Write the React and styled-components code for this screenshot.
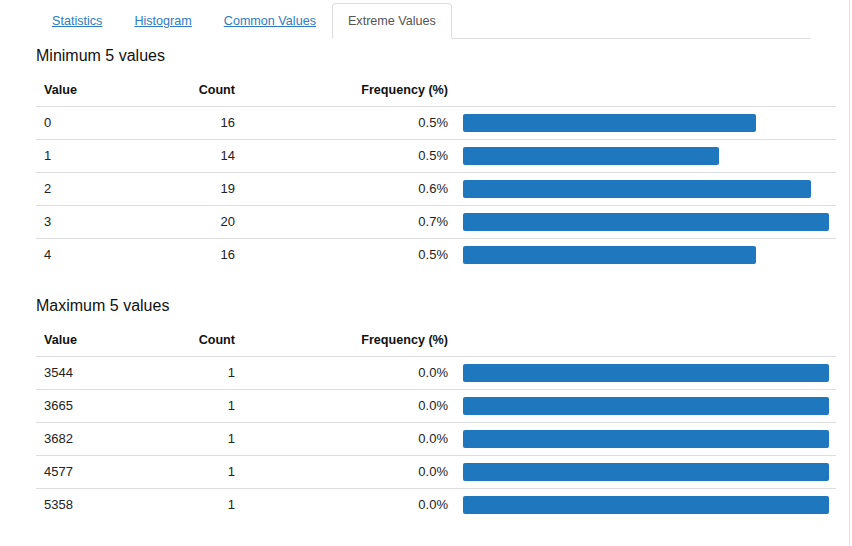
import React from 'react'
import styled, { createGlobalStyle } from 'styled-components'

const GlobalStyle = createGlobalStyle`
  body {
    margin: 0;
    background: #fff;
    font-family: "Liberation Sans", Arial, Helvetica, sans-serif;
    color: #222;
  }
`

const tabs = ['Statistics', 'Histogram', 'Common Values', 'Extreme Values']

const minValues = [
  { value: '0', count: 16, freq: '0.5%' },
  { value: '1', count: 14, freq: '0.5%' },
  { value: '2', count: 19, freq: '0.6%' },
  { value: '3', count: 20, freq: '0.7%' },
  { value: '4', count: 16, freq: '0.5%' },
]

const maxValues = [
  { value: '3544', count: 1, freq: '0.0%' },
  { value: '3665', count: 1, freq: '0.0%' },
  { value: '3682', count: 1, freq: '0.0%' },
  { value: '4577', count: 1, freq: '0.0%' },
  { value: '5358', count: 1, freq: '0.0%' },
]

const ValuesTable = ({ title, rows }) => {
  const top = Math.max(...rows.map((r) => r.count))
  return (
    <Section>
      <Heading>{title}</Heading>
      <Table>
        <colgroup>
          <col style={{ width: 104 }} />
          <col style={{ width: 103 }} />
          <col style={{ width: 213 }} />
          <col style={{ width: 380 }} />
        </colgroup>
        <thead>
          <tr>
            <Th>Value</Th>
            <Th $right>Count</Th>
            <Th $right>Frequency (%)</Th>
            <Th />
          </tr>
        </thead>
        <tbody>
          {rows.map((r) => (
            <tr key={r.value}>
              <Td>{r.value}</Td>
              <Td $right>{r.count}</Td>
              <Td $right>{r.freq}</Td>
              <BarCell>
                <Bar style={{ width: `${(r.count / top) * 100}%` }} />
              </BarCell>
            </tr>
          ))}
        </tbody>
      </Table>
    </Section>
  )
}

const App = () => {
  return (
    <Page>
      <GlobalStyle />
      <Content>
        <TabBar>
          {tabs.map((t) => (
            <Tab key={t} $active={t === 'Extreme Values'}>
              {t === 'Extreme Values' ? t : <a href="#">{t}</a>}
            </Tab>
          ))}
        </TabBar>
        <ValuesTable title="Minimum 5 values" rows={minValues} />
        <ValuesTable title="Maximum 5 values" rows={maxValues} />
      </Content>
    </Page>
  )
}

const Page = styled.div`
  width: 850px;
  height: 546px;
  border-right: 1px solid #e3e3e3;
  box-sizing: border-box;
`

const Content = styled.div`
  padding: 3px 0 0 36px;
`

const TabBar = styled.ul`
  display: flex;
  list-style: none;
  margin: 0;
  padding: 0;
  width: 775px;
  border-bottom: 1px solid #ddd;
`

const Tab = styled.li`
  height: 36px;
  margin-bottom: -1px;
  padding: 0 15px 1px;
  display: flex;
  align-items: center;
  font-size: 12.6px;
  border: 1px solid ${(p) => (p.$active ? '#ddd' : 'transparent')};
  border-bottom-color: ${(p) => (p.$active ? '#fff' : 'transparent')};
  border-radius: 4px 4px 0 0;
  background: #fff;
  color: #555;
  box-sizing: border-box;

  a {
    color: #2f7cc0;
    text-decoration: underline;
  }
`

const Section = styled.section`
  margin-bottom: 25px;
`

const Heading = styled.h4`
  margin: 7px 0 8px;
  font-size: 16px;
  line-height: 20px;
  font-weight: 500;
  color: #111;
`

const Table = styled.table`
  width: 800px;
  border-collapse: collapse;
  table-layout: fixed;
  font-size: 13px;
  line-height: 16px;
`

const Th = styled.th`
  padding: 8px;
  font-weight: bold;
  font-size: 12.6px;
  text-align: ${(p) => (p.$right ? 'right' : 'left')};
  color: #111;
`

const Td = styled.td`
  padding: 8px;
  border-top: 1px solid #ddd;
  text-align: ${(p) => (p.$right ? 'right' : 'left')};
  color: #222;
`

const BarCell = styled.td`
  padding: 7px;
  border-top: 1px solid #ddd;
`

const Bar = styled.div`
  height: 18px;
  background: #1f77bd;
  border-radius: 2px;
`

export default App
